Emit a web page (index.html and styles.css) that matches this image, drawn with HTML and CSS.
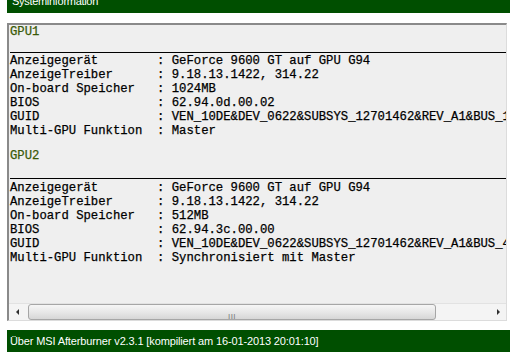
FILE: index.html
```html
<!DOCTYPE html>
<html lang="de">
<head>
    <meta charset="UTF-8">
    <title>Systeminformation</title>
    <link rel="stylesheet" href="styles.css">
</head>
<body>
    <div class="caption caption-top"><span>Systeminformation</span></div>

    <div class="panel">
        <div class="content">
            <div class="gpu-head">GPU1</div>
            <div class="rule"></div>
            <div class="rows">Anzeigegerät        : GeForce 9600 GT auf GPU G94
AnzeigeTreiber      : 9.18.13.1422, 314.22
On-board Speicher   : 1024MB
BIOS                : 62.94.0d.00.02
GUID                : VEN_10DE&amp;DEV_0622&amp;SUBSYS_12701462&amp;REV_A1&amp;BUS_1&amp;DEV_0&amp;FN_0
Multi-GPU Funktion  : Master</div>

            <div class="gpu-head second">GPU2</div>
            <div class="rule second"></div>
            <div class="rows">Anzeigegerät        : GeForce 9600 GT auf GPU G94
AnzeigeTreiber      : 9.18.13.1422, 314.22
On-board Speicher   : 512MB
BIOS                : 62.94.3c.00.00
GUID                : VEN_10DE&amp;DEV_0622&amp;SUBSYS_12701462&amp;REV_A1&amp;BUS_4&amp;DEV_0&amp;FN_0
Multi-GPU Funktion  : Synchronisiert mit Master</div>
        </div>

        <div class="hscroll">
            <div class="arrow arrow-left"></div>
            <div class="track">
                <div class="thumb"><span class="grip">III</span></div>
            </div>
            <div class="arrow arrow-right"></div>
        </div>
    </div>

    <div class="caption caption-bottom">Über MSI Afterburner v2.3.1 [kompiliert am 16-01-2013 20:01:10]</div>
</body>
</html>
```

FILE: styles.css
```css
body {
    margin: 0;
    padding: 0 0 0 7px;
    background-color: #ffffff;
    font-family: "Liberation Sans", Arial, sans-serif;
}
.caption {
    background-color: #004f00;
    color: #ffffff;
    font-size: 11px;
    overflow: hidden;
    white-space: nowrap;
}
.caption-top {
    height: 13px;
}
.caption-top span {
    display: block;
    margin-top: -6px;
    padding-left: 5px;
    line-height: 14px;
    letter-spacing: -0.3px;
}
.caption-bottom {
    height: 22px;
    line-height: 23px;
    padding-left: 3px;
    margin-top: 9px;
    letter-spacing: -0.13px;
}
.panel {
    width: 497px;
    height: 295px;
    margin-top: 10px;
    background-color: #efefef;
    border-top: 2px solid #8a8a8a;
    border-left: 2px solid #8a8a8a;
    border-right: 1px solid #dcdcdc;
    border-bottom: 1px solid #dcdcdc;
    display: flex;
    flex-direction: column;
}
.content {
    flex: 1;
    overflow: hidden;
    padding-left: 1px;
    font-family: "Liberation Mono", "Courier New", monospace;
    font-size: 12.25px;
    color: #000000;
    -webkit-text-stroke: 0.25px #000000;
}
.gpu-head {
    height: 14px;
    line-height: 14px;
    color: #3a5a08;
    -webkit-text-stroke: 0.25px #3a5a08;
}
.gpu-head.second {
    margin-top: 11px;
}
.rule {
    height: 0;
    border-top: 1px solid #000000;
    margin-top: 13px;
    margin-bottom: 2px;
}
.rule.second {
    margin-top: 15px;
    margin-bottom: 3px;
}
.rows {
    white-space: pre;
    line-height: 13.9px;
}
.hscroll {
    height: 16px;
    display: flex;
    background-color: #f4f4f4;
    border-top: 1px solid #e2e2e2;
}
.arrow {
    width: 17px;
    position: relative;
}
.arrow::after {
    content: "";
    position: absolute;
    top: 5px;
    border-top: 3px solid transparent;
    border-bottom: 3px solid transparent;
}
.arrow-left::after {
    left: 7px;
    border-right: 3px solid #303030;
}
.arrow-right::after {
    left: 8px;
    border-left: 3px solid #303030;
}
.track {
    flex: 1;
    padding: 0 53px 0 2px;
}
.thumb {
    height: 14px;
    border: 1px solid #a6a6a6;
    border-radius: 3px;
    background: linear-gradient(#f6f6f6, #e6e6e6 55%, #d6d6d6);
    text-align: center;
}
.grip {
    font-family: "Liberation Sans", Arial, sans-serif;
    font-size: 8px;
    line-height: 14px;
    color: #7a7a7a;
    letter-spacing: 0.5px;
}
```
